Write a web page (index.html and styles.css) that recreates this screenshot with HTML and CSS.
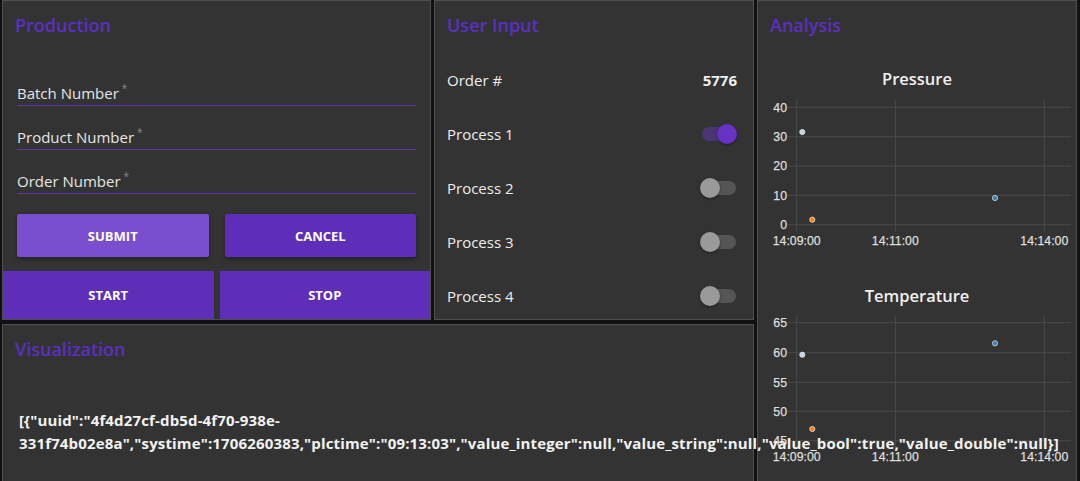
FILE: index.html
```html
<!DOCTYPE html>
<html>
<head>
<meta charset="utf-8">
<link rel="stylesheet" href="styles.css">
</head>
<body>
<div class="dash">
  <section class="panel prod">
    <div class="title">Production</div>
    <div class="fields">
      <div class="field"><span class="label">Batch Number</span><span class="req">*</span></div>
      <div class="field"><span class="label">Product Number</span><span class="req">*</span></div>
      <div class="field"><span class="label">Order Number</span><span class="req">*</span></div>
    </div>
    <div class="btns">
      <div class="btn light">Submit</div>
      <div class="btn">Cancel</div>
    </div>
    <div class="btns2">
      <div class="btn big">Start</div>
      <div class="btn big">Stop</div>
    </div>
  </section>

  <section class="panel user">
    <div class="title">User Input</div>
    <div class="row"><span>Order #</span><span class="val">5776</span></div>
    <div class="row"><span>Process 1</span><span class="tog on"><span class="track"></span><span class="thumb"></span></span></div>
    <div class="row"><span>Process 2</span><span class="tog"><span class="track"></span><span class="thumb"></span></span></div>
    <div class="row"><span>Process 3</span><span class="tog"><span class="track"></span><span class="thumb"></span></span></div>
    <div class="row"><span>Process 4</span><span class="tog"><span class="track"></span><span class="thumb"></span></span></div>
  </section>

  <section class="panel analysis">
    <div class="title">Analysis</div>
    <svg class="chart first" width="318" height="216" viewBox="0 0 318 216">
      <text class="ctitle" x="159" y="23">Pressure</text>
      <g class="grid">
        <line x1="30" y1="45.3" x2="313" y2="45.3"/>
        <line x1="30" y1="74.7" x2="313" y2="74.7"/>
        <line x1="30" y1="104" x2="313" y2="104"/>
        <line x1="30" y1="133.3" x2="313" y2="133.3"/>
        <line x1="30" y1="162.7" x2="313" y2="162.7"/>
        <line x1="38.7" y1="38" x2="38.7" y2="170"/>
        <line x1="137.3" y1="38" x2="137.3" y2="170"/>
        <line x1="286.3" y1="38" x2="286.3" y2="170"/>
      </g>
      <g class="ylab">
        <text x="29" y="49.5">40</text>
        <text x="29" y="79">30</text>
        <text x="29" y="108">20</text>
        <text x="29" y="137.5">10</text>
        <text x="29" y="167">0</text>
      </g>
      <g class="xlab">
        <text x="38.7" y="183">14:09:00</text>
        <text x="137.3" y="183">14:11:00</text>
        <text x="286.3" y="183">14:14:00</text>
      </g>
      <circle class="p1" cx="44.3" cy="70" r="2.6"/>
      <circle class="p2" cx="54.3" cy="157.7" r="2.6"/>
      <circle class="p3" cx="237" cy="136" r="2.6"/>
    </svg>
    <svg class="chart" width="318" height="216" viewBox="0 0 318 216">
      <text class="ctitle" x="159" y="23.7">Temperature</text>
      <g class="grid">
        <line x1="30" y1="44.7" x2="313" y2="44.7"/>
        <line x1="30" y1="74.7" x2="313" y2="74.7"/>
        <line x1="30" y1="104.3" x2="313" y2="104.3"/>
        <line x1="30" y1="133.3" x2="313" y2="133.3"/>
        <line x1="30" y1="162.7" x2="313" y2="162.7"/>
        <line x1="38.7" y1="38" x2="38.7" y2="170"/>
        <line x1="137.3" y1="38" x2="137.3" y2="170"/>
        <line x1="286.3" y1="38" x2="286.3" y2="170"/>
      </g>
      <g class="ylab">
        <text x="29" y="49">65</text>
        <text x="29" y="79">60</text>
        <text x="29" y="108.5">55</text>
        <text x="29" y="137.5">50</text>
        <text x="29" y="167">45</text>
      </g>
      <g class="xlab">
        <text x="38.7" y="183">14:09:00</text>
        <text x="137.3" y="183">14:11:00</text>
        <text x="286.3" y="183">14:14:00</text>
      </g>
      <circle class="p1" cx="44.3" cy="76.7" r="2.6"/>
      <circle class="p2" cx="54.3" cy="151" r="2.6"/>
      <circle class="p3" cx="237" cy="65.3" r="2.6"/>
    </svg>
  </section>

  <section class="panel viz">
    <div class="title">Visualization</div>
    <div class="json">[{"uuid":"4f4d27cf-db5d-4f70-938e-<br>331f74b02e8a","systime":1706260383,"plctime":"09:13:03","value_integer":null,"value_string":null,"value_bool":true,"value_double":null}]</div>
  </section>
</div>
</body>
</html>
```

FILE: styles.css
```css
* { box-sizing: border-box; }
html, body { margin: 0; height: 100%; }
body {
  background: #111;
  font-family: "Open Sans", "Noto Sans", sans-serif;
  color: #eee;
  overflow: hidden;
}
.dash {
  display: grid;
  grid-template-columns: 429px 320px 320px;
  grid-template-rows: 320px 200px;
  column-gap: 3px;
  row-gap: 4px;
  padding-left: 2px;
}
.panel {
  background: #333;
  border: 1px solid #4f4f4f;
}
.title {
  height: 48px;
  line-height: 49px;
  padding-left: 12px;
  font-size: 18px;
  font-weight: 600;
  color: #5c2fc4;
}

/* Production */
.fields { padding: 13px 14px 0; }
.field {
  height: 44px;
  display: flex;
  align-items: flex-end;
  border-bottom: 1px solid #5b34a8;
  padding: 0 0 2px 0;
}
.label { font-size: 15px; line-height: 20px; color: #e6e6e6; }
.req { font-size: 10px; color: #8a8a8a; align-self: flex-start; margin: 21px 0 0 3px; line-height: 10px; }
.btns { display: flex; gap: 16px; padding: 20px 14px 0; }
.btns2 { display: flex; gap: 6px; margin-top: 14px; }
.btn {
  flex: 1;
  height: 43px;
  display: flex;
  align-items: center;
  justify-content: center;
  background: #5e2eb8;
  color: #fff;
  font-size: 13px;
  font-weight: 700;
  text-transform: uppercase;
  border-radius: 2px;
  box-shadow: 0 2px 4px rgba(0,0,0,0.35);
}
.btn.light { background: #7b4ecf; }
.btn.big { height: 48px; box-shadow: none; border-radius: 0; }

/* User input */
.title + .row { margin-top: 4px; }
.row {
  height: 54px;
  display: flex;
  align-items: center;
  justify-content: space-between;
  padding: 0 16px 0 12px;
  font-size: 15px;
  color: #eee;
}
.val { font-weight: 700; font-size: 15px; }
.tog { position: relative; width: 36px; height: 20px; }
.track {
  position: absolute; left: 1px; top: 3px;
  width: 34px; height: 14px; border-radius: 7px;
  background: #555;
}
.thumb {
  position: absolute; left: -1px; top: 0;
  width: 20px; height: 20px; border-radius: 50%;
  background: #9a9a9a;
  box-shadow: 0 1px 3px rgba(0,0,0,0.4);
}
.tog.on .track { background: #4b3675; }
.tog.on .thumb { left: 16px; background: #6832c6; }

/* Analysis */
.analysis { grid-column: 3; grid-row: 1 / span 2; }
.chart { display: block; }
.chart.first { margin-top: 13px; }
.ctitle {
  font-family: "Open Sans", "Noto Sans", sans-serif;
  font-size: 16.5px;
  font-weight: 600;
  fill: #f0f0f0;
  text-anchor: middle;
}
.grid line { stroke: #4b4b4b; stroke-width: 1; }
.ylab text, .xlab text {
  font-family: "Liberation Sans", Arial, sans-serif;
  font-size: 12.3px;
  font-weight: 500;
  fill: #dedede;
  stroke: #dedede;
  stroke-width: 0.25;
}
.ylab text { text-anchor: end; }
.xlab text { text-anchor: middle; }
.p1 { fill: #c2d6ee; stroke: #ddd; stroke-width: 0.8; }
.p2 { fill: #ff7f0e; stroke: #ddd; stroke-width: 0.8; }
.p3 { fill: #2b7fc0; stroke: #ddd; stroke-width: 0.8; }

/* Visualization */
.viz { grid-column: 1 / span 2; grid-row: 2; }
.json {
  margin-top: 36px;
  padding-left: 16px;
  font-size: 15px;
  font-weight: 700;
  letter-spacing: 0.15px;
  line-height: 23px;
  color: #f2f2f2;
  white-space: nowrap;
}
```
